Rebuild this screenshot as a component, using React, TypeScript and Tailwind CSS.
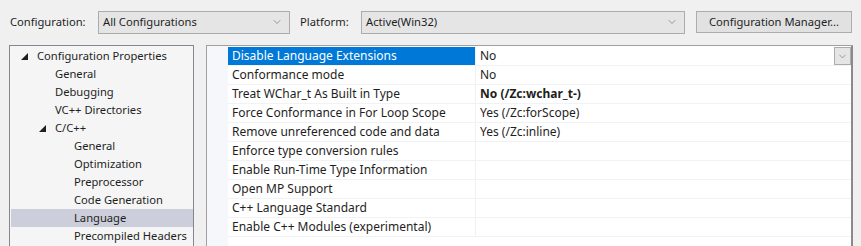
import { ChevronDown } from "lucide-react";

type Prop = { name: string; value: string; bold?: boolean };

const TREE: { label: string; level: number; expanded?: boolean; selected?: boolean }[] = [
  { label: "Configuration Properties", level: 0, expanded: true },
  { label: "General", level: 1 },
  { label: "Debugging", level: 1 },
  { label: "VC++ Directories", level: 1 },
  { label: "C/C++", level: 1, expanded: true },
  { label: "General", level: 2 },
  { label: "Optimization", level: 2 },
  { label: "Preprocessor", level: 2 },
  { label: "Code Generation", level: 2 },
  { label: "Language", level: 2, selected: true },
  { label: "Precompiled Headers", level: 2 },
];

const PROPS: Prop[] = [
  { name: "Disable Language Extensions", value: "No" },
  { name: "Conformance mode", value: "No" },
  { name: "Treat WChar_t As Built in Type", value: "No (/Zc:wchar_t-)", bold: true },
  { name: "Force Conformance in For Loop Scope", value: "Yes (/Zc:forScope)" },
  { name: "Remove unreferenced code and data", value: "Yes (/Zc:inline)" },
  { name: "Enforce type conversion rules", value: "" },
  { name: "Enable Run-Time Type Information", value: "" },
  { name: "Open MP Support", value: "" },
  { name: "C++ Language Standard", value: "" },
  { name: "Enable C++ Modules (experimental)", value: "" },
];

const indent = ["pl-[10px]", "pl-[28px]", "pl-[47px]"];

function Triangle() {
  return (
    <svg width="7" height="7" viewBox="0 0 7 7" className="mr-[9px] shrink-0">
      <path d="M7 0 L7 7 L0 7 Z" fill="#1e1e1e" />
    </svg>
  );
}

function Select({ value, className }: { value: string; className: string }) {
  return (
    <div
      className={
        "flex h-[23px] items-center justify-between border border-[#acacac] bg-[#e5e5e5] pl-[4px] pr-[6px] " +
        className
      }
    >
      <span className="whitespace-nowrap">{value}</span>
      <ChevronDown size={12} strokeWidth={1.2} className="text-[#606060]" />
    </div>
  );
}

export default function App() {
  return (
    <div className="h-[246px] w-[861px] overflow-hidden bg-[#f0f0f0] text-[12px] text-[#1e1e1e] [font-family:'Noto_Sans',sans-serif]">
      {/* toolbar */}
      <div className="flex h-[45px] items-center pb-[1px] pl-[10px] text-[11.2px]">
        <span className="w-[88px] whitespace-nowrap">Configuration:</span>
        <Select value="All Configurations" className="w-[192px]" />
        <span className="ml-[10px] w-[61px]">Platform:</span>
        <Select value="Active(Win32)" className="w-[324px]" />
        <button
          type="button"
          className="ml-[11px] h-[22px] w-[156px] whitespace-nowrap border border-[#adadad] bg-[#e1e1e1] text-center"
        >
          Configuration Manager...
        </button>
      </div>

      <div className="flex h-[201px]">
        {/* tree */}
        <div className="ml-[9px] w-[185px] border border-b-0 border-[#828790] bg-[#f5f5f5] pl-[1px] pt-[1px] text-[11.2px]">
          {TREE.map((t, i) => (
            <div
              key={i}
              className={
                "flex h-[18px] w-[182px] items-center whitespace-nowrap " +
                indent[t.level] +
                (t.selected ? " bg-[#cccedb]" : "")
              }
            >
              {t.expanded ? <Triangle /> : <span className="w-[16px] shrink-0" />}
              <span>{t.label}</span>
            </div>
          ))}
        </div>

        {/* property grid */}
        <div className="ml-[12px] flex w-[647px] flex-col border-l border-t border-[#a0a0a0] bg-white">
          <div className="flex flex-1">
            <div className="w-[21px] bg-[#f5f7fa]" />
            <div className="flex-1 border-r-[2px] border-[#8a8a8a] pt-[1px]">
              {PROPS.map((p, i) => {
                const sel = i === 0;
                return (
                  <div key={i} className="flex h-[19px] border-b border-[#f0f2f5]">
                    <div
                      className={
                        "flex w-[248px] items-center whitespace-nowrap border-r border-[#eef1f6] pl-[4px] " +
                        (sel ? "bg-[#0078d7] text-white" : "")
                      }
                    >
                      {p.name}
                    </div>
                    <div className="flex flex-1 items-center justify-between pl-[4px]">
                      <span className={p.bold ? "font-bold" : ""}>{p.value}</span>
                      {sel && (
                        <div className="flex h-[18px] w-[17px] items-center justify-center border border-[#acacac] bg-[#e5e5e5]">
                          <ChevronDown size={11} strokeWidth={1.2} className="text-[#606060]" />
                        </div>
                      )}
                    </div>
                  </div>
                );
              })}
            </div>
          </div>
        </div>
      </div>
    </div>
  );
}
